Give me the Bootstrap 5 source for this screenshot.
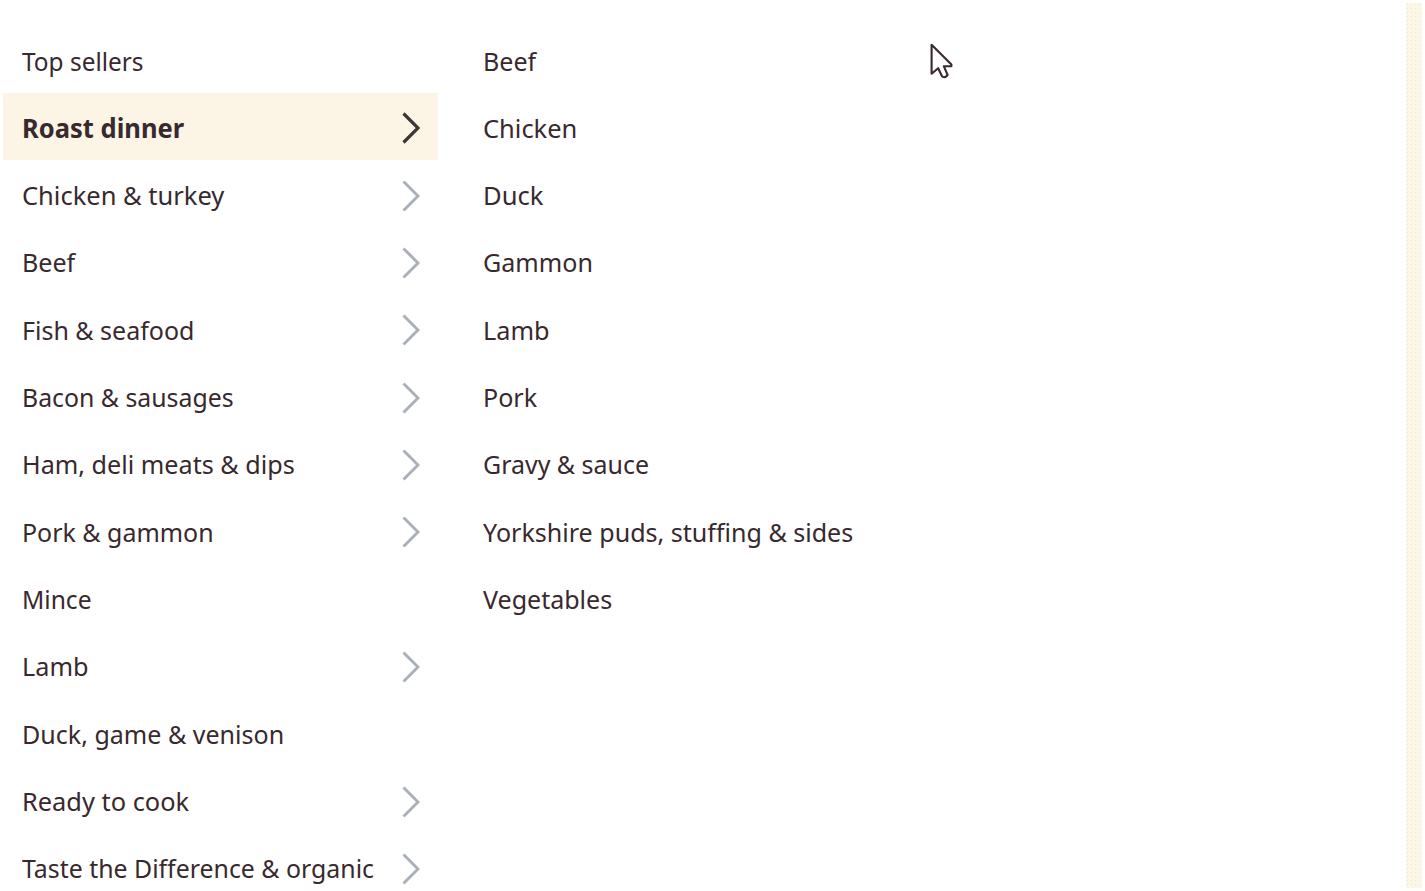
<!DOCTYPE html>
<html lang="en">
<head>
<meta charset="utf-8">
<title>Meat &amp; fish menu</title>
<link rel="stylesheet" href="https://cdn.jsdelivr.net/npm/bootstrap@5.3.0/dist/css/bootstrap.min.css">
<script src="https://cdn.jsdelivr.net/npm/bootstrap@5.3.0/dist/js/bootstrap.bundle.min.js"></script>
<style>
  body { height: 891px; background: #fff; color: #38292e; font-family: "Noto Sans", "Open Sans", sans-serif; font-size: 26px; line-height: 36px; }
  .mega-menu { height: 891px; padding: 25.5px 3px 0; }
  .level { display: grid; grid-auto-rows: 67.33px; align-content: start; margin: 0; padding: 0; list-style: none; }
  .level-one { width: 435px; }
  .level-two { margin-left: 25px; width: 460px; }
  .level a { color: inherit; text-decoration: none; height: 67px; padding: 3px 18px 0 19px; }
  .level-two a { padding-left: 20px; }
  .level a.active { background: #fcf5e5; font-weight: 700; }
  .label-box { min-width: 0; }
  .label-text { display: inline-block; white-space: nowrap; transform-origin: 0 50%; }
  .chevron { flex: none; width: 18px; height: 32px; margin-top: 1px; fill: none; stroke: #a9b0b9; stroke-width: 2.9; }
  .active .chevron { stroke: #42343b; stroke-width: 3.2; }
  .page-edge { top: 3px; right: 3px; width: 16px; height: 885px; background: radial-gradient(circle at 1.5px 1.5px, #dce8ee 0 .8px, transparent 1px) 0 0 / 4px 4px, #fdf6e5; }
  .pointer { left: 929px; top: 42px; width: 26px; height: 38px; }
</style>
</head>
<body>
<nav class="mega-menu d-flex position-relative overflow-hidden">
  <ul class="level level-one" id="departments"></ul>
  <ul class="level level-two" id="aisles"></ul>
  <div class="page-edge position-absolute"></div>
  <svg class="pointer position-absolute" viewBox="0 0 26 38"><path d="M2.6 2.8V31.8L9.2 26.2L13 34.3Q15.6 36.6 18.6 33L14.8 24.2H22.4V22.5Z" fill="#fff" stroke="#38292e" stroke-width="2.1" stroke-linejoin="round"/></svg>
</nav>
<script>
  // [label, label width, has submenu]
  const departments = [
    ["Top sellers", 122, 0], ["Roast dinner", 162, 1], ["Chicken & turkey", 202, 1], ["Beef", 53, 1],
    ["Fish & seafood", 172, 1], ["Bacon & sausages", 212, 1], ["Ham, deli meats & dips", 273, 1],
    ["Pork & gammon", 192, 1], ["Mince", 70, 0], ["Lamb", 67, 1], ["Duck, game & venison", 262, 0],
    ["Ready to cook", 167, 1], ["Taste the Difference & organic", 352, 1]
  ];
  const aisles = [
    ["Beef", 53, 0], ["Chicken", 94, 0], ["Duck", 60, 0], ["Gammon", 110, 0], ["Lamb", 67, 0], ["Pork", 54, 0],
    ["Gravy & sauce", 166, 0], ["Yorkshire puds, stuffing & sides", 370, 0], ["Vegetables", 129, 0]
  ];
  const chevron = '<svg class="chevron" viewBox="0 0 18 32"><path d="M1.5 1.5L16 16L1.5 30.5"/></svg>';
  function fill(id, rows) {
    const list = document.getElementById(id);
    rows.forEach(([text, width, more]) => {
      const item = document.createElement("li");
      const active = text === "Roast dinner" ? " active" : "";
      item.innerHTML = `<a href="#" class="d-flex align-items-center${active}"><span class="label-box flex-grow-1"><span class="label-text"></span></span>${more ? chevron : ""}</a>`;
      const label = item.querySelector(".label-text");
      label.textContent = text;
      list.append(item);
      label.style.transform = `scaleX(${width / label.offsetWidth})`;
    });
  }
  fill("departments", departments);
  fill("aisles", aisles);
</script>
</body>
</html>
